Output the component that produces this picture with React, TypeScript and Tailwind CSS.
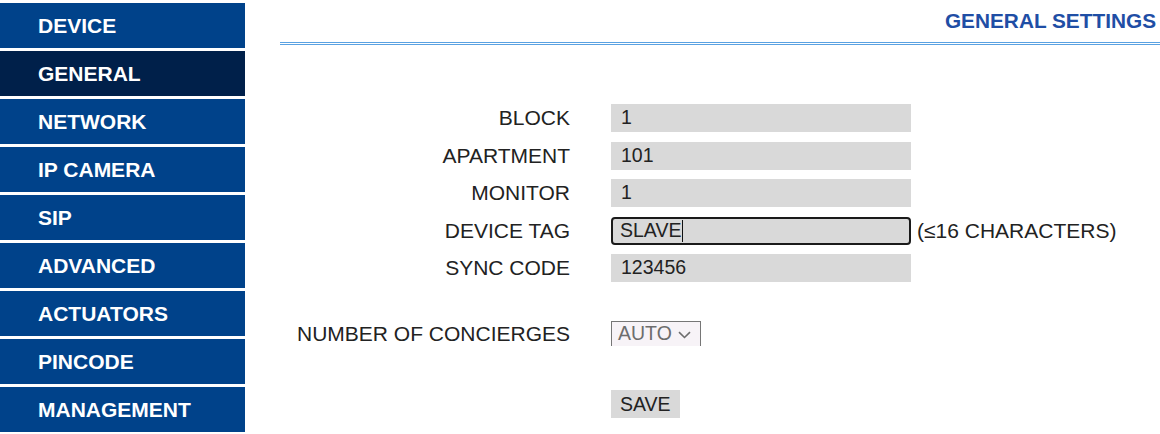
const menu = [
  "DEVICE",
  "GENERAL",
  "NETWORK",
  "IP CAMERA",
  "SIP",
  "ADVANCED",
  "ACTUATORS",
  "PINCODE",
  "MANAGEMENT",
];

const fields = [
  { label: "BLOCK", value: "1" },
  { label: "APARTMENT", value: "101" },
  { label: "MONITOR", value: "1" },
  { label: "DEVICE TAG", value: "SLAVE", focused: true, hint: "(≤16 CHARACTERS)" },
  { label: "SYNC CODE", value: "123456" },
];

export default function App() {
  return (
    <div
      className="flex w-[1160px] h-[434px] overflow-hidden bg-white text-[#222]"
      style={{ fontFamily: '"Liberation Sans", Arial, sans-serif' }}
    >
      <nav className="w-[245px] shrink-0 flex flex-col gap-[3px] pt-[3px]">
        {menu.map((item) => (
          <div
            key={item}
            className={`h-[45px] shrink-0 flex items-center pl-[38px] text-[21px] font-bold text-white ${
              item === "GENERAL" ? "bg-[#00204a]" : "bg-[#00428a]"
            }`}
          >
            {item}
          </div>
        ))}
      </nav>

      <main className="flex-1 ml-[35px]">
        <div className="pt-[9px] pb-[9px] pr-[4px] border-b-[3px] border-double border-[#5aa2e2] text-right">
          <h1 className="text-[20.8px] leading-[24px] font-bold text-[#1f4ea5]">
            GENERAL SETTINGS
          </h1>
        </div>

        <div className="mt-[59px] flex flex-col gap-[9.5px]">
          {fields.map((f) => (
            <div key={f.label} className="flex items-center h-[28px]">
              <div className="w-[290px] text-right text-[21px]">{f.label}</div>
              <div className="relative ml-[41px]">
                <input
                  readOnly
                  value={f.value}
                  className={`w-[300px] h-[28px] bg-[#d9d9d9] text-[19.5px] text-[#222] outline-none ${
                    f.focused ? "border-2 border-[#1a1a1a] rounded-[4px] pl-[7px]" : "pl-[10px]"
                  }`}
                />
                {f.focused && (
                  <span className="absolute left-[71px] top-[3px] h-[22px] w-px bg-[#111]" />
                )}
              </div>
              {f.hint && <span className="ml-[6px] text-[21px]">{f.hint}</span>}
            </div>
          ))}
        </div>

        <div className="mt-[39px] flex items-center h-[25px]">
          <div className="w-[290px] text-right text-[21px]">NUMBER OF CONCIERGES</div>
          <div className="ml-[41px] w-[90px] h-[25px] flex items-center gap-[6px] pl-[6px] border-t border-l border-r border-[#767676] bg-[#f7f3f7] text-[19.5px] text-[#6d6d6d]">
            AUTO
            <svg width="13" height="8" viewBox="0 0 13 8" fill="none" className="mt-[2px]">
              <path d="M1 1.2 L6.5 6.5 L12 1.2" stroke="#6d6d6d" strokeWidth="1.6" />
            </svg>
          </div>
        </div>

        <div className="mt-[44px] ml-[331px]">
          <button className="h-[28px] px-[9px] bg-[#d9d9d9] text-[19.5px] text-[#222]">SAVE</button>
        </div>
      </main>
    </div>
  );
}
